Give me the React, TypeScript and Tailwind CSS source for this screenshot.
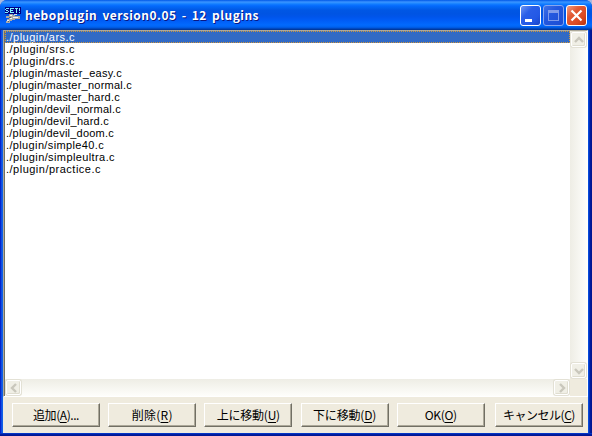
import { useLayoutEffect, useRef, useState } from 'react';
import type { ReactNode } from 'react';

/* Text run whose tracking is tuned so that it fills the given width. */
function Fit({ width, children, className = '' }: { width: number; children: ReactNode; className?: string }) {
  const ref = useRef<HTMLSpanElement>(null);
  const [spacing, setSpacing] = useState(0);
  useLayoutEffect(() => {
    const el = ref.current;
    if (!el) return;
    const count = (el.textContent ?? '').length;
    setSpacing((width - el.getBoundingClientRect().width) / count);
  }, [width]);
  return (
    <span ref={ref} className={`inline-block whitespace-pre ${className}`} style={{ letterSpacing: spacing }}>
      {children}
    </span>
  );
}

const plugins = [
  { path: './plugin/ars.c', width: 69 },
  { path: './plugin/srs.c', width: 69 },
  { path: './plugin/drs.c', width: 69 },
  { path: './plugin/master_easy.c', width: 116 },
  { path: './plugin/master_normal.c', width: 126 },
  { path: './plugin/master_hard.c', width: 114 },
  { path: './plugin/devil_normal.c', width: 115 },
  { path: './plugin/devil_hard.c', width: 103 },
  { path: './plugin/devil_doom.c', width: 108 },
  { path: './plugin/simple40.c', width: 98 },
  { path: './plugin/simpleultra.c', width: 109 },
  { path: './plugin/practice.c', width: 95 },
];

const actions = [
  { label: '追加', letter: 'A', tail: '...', width: 46 },
  { label: '削除', letter: 'R', tail: '', width: 41 },
  { label: '上に移動', letter: 'U', tail: '', width: 63 },
  { label: '下に移動', letter: 'D', tail: '', width: 63 },
  { label: 'OK', letter: 'O', tail: '', width: 32 },
  { label: 'キャンセル', letter: 'C', tail: '', width: 72 },
];

function ScrollButton({ d }: { d: string }) {
  return (
    <div className="flex h-[15px] w-[15px] shrink-0 items-center justify-center rounded-[2px] border border-white bg-[#f0efe6] shadow-[inset_-1px_-1px_0_#dfddd0,0_0_0_1px_#e3e1d5]">
      <svg width="10" height="10" viewBox="0 0 10 10" fill="none" stroke="#c9c7bc" strokeWidth="2.4">
        <path d={d} />
      </svg>
    </div>
  );
}

function AppIcon() {
  return (
    <svg width="16" height="16" viewBox="0 0 16 16" shapeRendering="crispEdges" className="shrink-0">
      <path d="M0 0h16v7H0z" fill="#000080" />
      <g stroke="#7ff4ff" fill="none" strokeWidth="1">
        <path d="M1 1.500h3M.5 2v1M1 3.500h2M3.500 4v1M0 5.500h3" />
        <path d="M5 1.500h4M5.500 1v5M5 3.500h3M5 5.500h4" />
        <path d="M10 1.500h3M11.500 1v5M14.500 1v3M14.500 5v1" />
      </g>
      <path d="M4 7h4v1h2v1h5v3h-5v1H7v1H5v2H1v-2h1v-2h2v-1H1V9h3z" fill="#a8a8a8" />
      <path d="M5 8.500h2M8 10.500h5M2 13.500h2M5 11.500h2" stroke="#f4f4f4" fill="none" />
      <path d="M4 10h2v1H4zM3 14h1v1H3z" fill="#606060" />
      <path d="M9 7h3v1H9z" fill="#d8dce8" />
    </svg>
  );
}

export default function App() {
  return (
    <div className="h-[436px] w-[592px] overflow-hidden bg-[#a9b9e0]">
      <div className="flex h-[436px] flex-col rounded-t-[7px] bg-[linear-gradient(to_right,#0019c0_0,#0831d9_1px,#166aee_2px,#0855dd_3px,#0855dd_588px,#0441d8_589px,#001da0_590px,#00138c_592px)]">
        <header className="flex h-[30px] shrink-0 items-center rounded-t-[7px] bg-[linear-gradient(to_bottom,#0058e6_0,#3a93ff_2px,#288eff_3px,#127dff_4px,#0369fc_6px,#0262ee_8px,#0057e5_10px,#0054e3_14px,#0055eb_17px,#005bf5_20px,#026afe_25px,#0062ef_27px,#0052d6_28px,#0040ab_29px,#003092_30px)] pl-[5px] pr-[5px]">
          <AppIcon />
          <h1 className="ml-[4px] h-5 font-['Noto_Sans_CJK_JP',sans-serif] text-[12px] font-bold leading-[20px] text-white [text-shadow:1px_1px_0_#0a1883] [word-spacing:2px]">
            <Fit width={234}>heboplugin version0.05 - 12 plugins</Fit>
          </h1>
          <div className="ml-auto flex gap-[2px] pt-[1px]">
            <div className="flex h-[21px] w-[21px] items-end rounded-[3px] border border-white bg-[linear-gradient(135deg,#6e96f2_0%,#2a5ee8_35%,#2358e6_70%,#1843c6_100%)] pb-[3px] pl-[4px]">
              <i className="block h-[3px] w-[7px] bg-white" />
            </div>
            <div className="flex h-[21px] w-[21px] items-center justify-center rounded-[3px] border border-[#86a6ef] bg-[linear-gradient(135deg,#3f70e6_0%,#2358df_40%,#1d4dd2_100%)]">
              <i className="block h-[11px] w-[11px] border border-t-[3px] border-[#7f9bea]" />
            </div>
            <div className="flex h-[21px] w-[21px] items-center justify-center rounded-[3px] border border-white bg-[linear-gradient(135deg,#f09c82_0%,#e25a35_35%,#dc4a22_70%,#b8330c_100%)]">
              <svg width="13" height="13" viewBox="0 0 13 13" stroke="white" strokeWidth="2.2">
                <path d="M1.5 1.5l10 10M11.5 1.5l-10 10" />
              </svg>
            </div>
          </div>
        </header>

        <main className="ml-[3px] mr-[4px] flex h-[403px] shrink-0 flex-col bg-[#efebde]">
          <section className="flex h-[367px] w-[585px] flex-col border-b border-l border-r border-t border-b-white border-l-[#aca899] border-r-white border-t-[#aca899]">
            <div className="flex h-[348px] border-l border-[#716f64]">
              <ul className="flex-1 bg-white font-['Liberation_Sans',sans-serif] text-[11px] leading-[12px] text-black">
                {plugins.map((plugin, index) => (
                  <li
                    key={plugin.path}
                    className={
                      index === 0
                        ? 'h-[12px] bg-[#316ac5] pl-px text-white outline-1 outline-dotted outline-[#ce953a] -outline-offset-1'
                        : 'h-[12px] pl-px'
                    }
                  >
                    <Fit width={plugin.width} className="h-[12px] align-top">{plugin.path}</Fit>
                  </li>
                ))}
              </ul>
              <div className="flex w-[17px] flex-col items-center justify-between bg-[linear-gradient(to_right,#eeede5,#fefefb)] py-px">
                <ScrollButton d="M1 7l4-4 4 4" />
                <ScrollButton d="M1 3l4 4 4-4" />
              </div>
            </div>
            <div className="flex h-[17px] border-l border-[#716f64]">
              <div className="flex flex-1 items-center justify-between bg-[linear-gradient(to_bottom,#eeede5,#fefefb)] px-px">
                <ScrollButton d="M7 1l-4 4 4 4" />
                <ScrollButton d="M3 1l4 4-4 4" />
              </div>
              <div className="w-[17px] bg-[#efebde]" />
            </div>
          </section>

          <footer className="flex gap-[8.2px] pl-[9px] pt-[6px]">
            {actions.map((action) => (
              <button
                key={action.letter}
                className="flex h-[24px] w-[88px] shrink-0 items-center justify-center border border-b-[#716f64] border-l-white border-r-[#716f64] border-t-white bg-[#efebde] font-['Noto_Sans_CJK_JP',sans-serif] text-[12px] leading-[20px] text-black shadow-[inset_-1px_-1px_0_#aca899] last:ml-[2px]"
              >
                <Fit width={action.width} className="-mt-px">
                  {action.label}(<u className="underline-offset-2">{action.letter}</u>){action.tail}
                </Fit>
              </button>
            ))}
          </footer>
        </main>
        <div className="h-[3px] shrink-0 bg-[linear-gradient(to_bottom,#0441d8,#001da0,#00138c)]" />
      </div>
    </div>
  );
}
